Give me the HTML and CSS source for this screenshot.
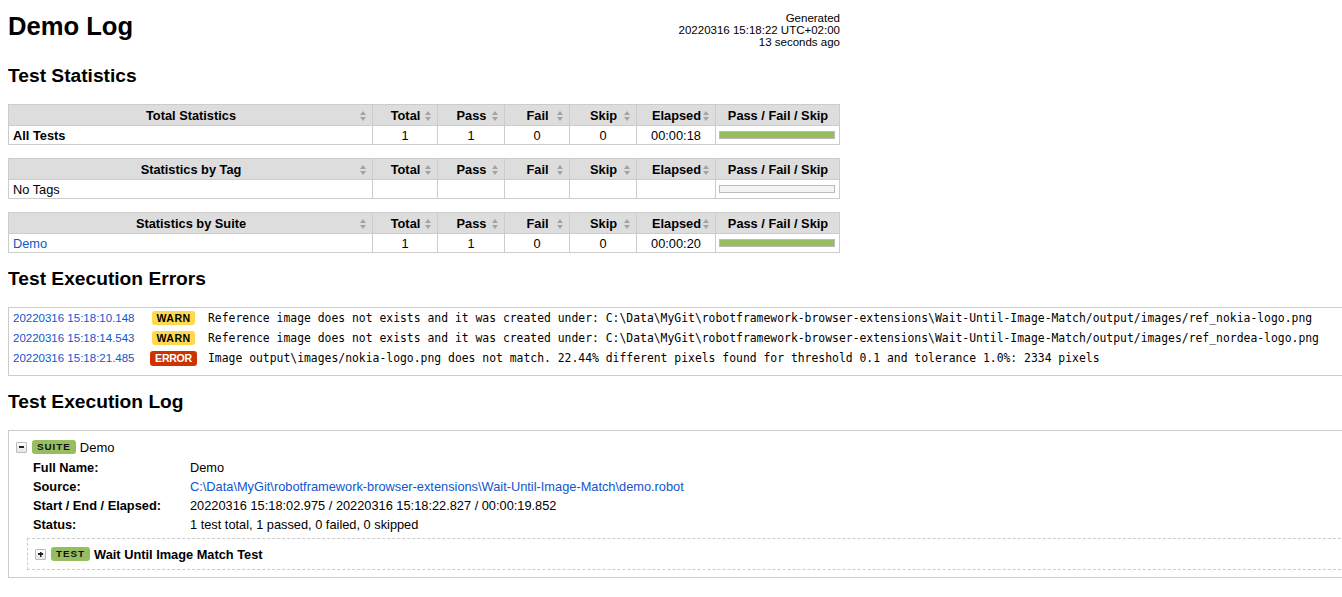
FILE: index.html
```html
<!DOCTYPE html>
<html lang="en">
<head>
<meta charset="utf-8">
<title>Demo Log</title>
<link rel="stylesheet" href="styles.css">
</head>
<body>
<header class="page-header">
  <h1 class="title">Demo Log</h1>
  <div class="generated">Generated<br>20220316 15:18:22 UTC+02:00<br>13 seconds ago</div>
</header>

<h2 class="section-title">Test Statistics</h2>

<table class="stats">
  <colgroup><col class="c-name"><col class="c-num"><col class="c-num2"><col class="c-num"><col class="c-num2"><col class="c-el"><col class="c-graph"></colgroup>
  <thead>
    <tr>
      <th><div class="th-in"><span></span><span>Total Statistics</span><span class="sort"></span></div></th>
      <th><div class="th-in"><span></span><span>Total</span><span class="sort"></span></div></th>
      <th><div class="th-in"><span></span><span>Pass</span><span class="sort"></span></div></th>
      <th><div class="th-in"><span></span><span>Fail</span><span class="sort"></span></div></th>
      <th><div class="th-in"><span></span><span>Skip</span><span class="sort"></span></div></th>
      <th><div class="th-in"><span></span><span>Elapsed</span><span class="sort"></span></div></th>
      <th class="graph-h">Pass / Fail / Skip</th>
    </tr>
  </thead>
  <tbody>
    <tr>
      <td class="name bold">All Tests</td>
      <td>1</td><td>1</td><td>0</td><td>0</td><td>00:00:18</td>
      <td class="graph"><div class="bar pass"></div></td>
    </tr>
  </tbody>
</table>

<table class="stats">
  <colgroup><col class="c-name"><col class="c-num"><col class="c-num2"><col class="c-num"><col class="c-num2"><col class="c-el"><col class="c-graph"></colgroup>
  <thead>
    <tr>
      <th><div class="th-in"><span></span><span>Statistics by Tag</span><span class="sort"></span></div></th>
      <th><div class="th-in"><span></span><span>Total</span><span class="sort"></span></div></th>
      <th><div class="th-in"><span></span><span>Pass</span><span class="sort"></span></div></th>
      <th><div class="th-in"><span></span><span>Fail</span><span class="sort"></span></div></th>
      <th><div class="th-in"><span></span><span>Skip</span><span class="sort"></span></div></th>
      <th><div class="th-in"><span></span><span>Elapsed</span><span class="sort"></span></div></th>
      <th class="graph-h">Pass / Fail / Skip</th>
    </tr>
  </thead>
  <tbody>
    <tr>
      <td class="name">No Tags</td>
      <td></td><td></td><td></td><td></td><td></td>
      <td class="graph"><div class="bar empty"></div></td>
    </tr>
  </tbody>
</table>

<table class="stats">
  <colgroup><col class="c-name"><col class="c-num"><col class="c-num2"><col class="c-num"><col class="c-num2"><col class="c-el"><col class="c-graph"></colgroup>
  <thead>
    <tr>
      <th><div class="th-in"><span></span><span>Statistics by Suite</span><span class="sort"></span></div></th>
      <th><div class="th-in"><span></span><span>Total</span><span class="sort"></span></div></th>
      <th><div class="th-in"><span></span><span>Pass</span><span class="sort"></span></div></th>
      <th><div class="th-in"><span></span><span>Fail</span><span class="sort"></span></div></th>
      <th><div class="th-in"><span></span><span>Skip</span><span class="sort"></span></div></th>
      <th><div class="th-in"><span></span><span>Elapsed</span><span class="sort"></span></div></th>
      <th class="graph-h">Pass / Fail / Skip</th>
    </tr>
  </thead>
  <tbody>
    <tr>
      <td class="name"><a href="#s1">Demo</a></td>
      <td>1</td><td>1</td><td>0</td><td>0</td><td>00:00:20</td>
      <td class="graph"><div class="bar pass"></div></td>
    </tr>
  </tbody>
</table>

<h2 class="section-title">Test Execution Errors</h2>

<div class="errors">
  <div class="err-row">
    <a class="err-time" href="#e1">20220316 15:18:10.148</a>
    <div class="err-level"><span class="label warn">WARN</span></div>
    <div class="err-msg">Reference image does not exists and it was created under: C:\Data\MyGit\robotframework-browser-extensions\Wait-Until-Image-Match/output/images/ref_nokia-logo.png</div>
  </div>
  <div class="err-row">
    <a class="err-time" href="#e2">20220316 15:18:14.543</a>
    <div class="err-level"><span class="label warn">WARN</span></div>
    <div class="err-msg">Reference image does not exists and it was created under: C:\Data\MyGit\robotframework-browser-extensions\Wait-Until-Image-Match/output/images/ref_nordea-logo.png</div>
  </div>
  <div class="err-row">
    <a class="err-time" href="#e3">20220316 15:18:21.485</a>
    <div class="err-level"><span class="label error">ERROR</span></div>
    <div class="err-msg">Image output\images/nokia-logo.png does not match. 22.44% different pixels found for threshold 0.1 and tolerance 1.0%: 2334 pixels</div>
  </div>
</div>

<h2 class="section-title">Test Execution Log</h2>

<div class="log" id="s1">
  <div class="el-header">
    <span class="toggle minus"></span>
    <span class="label suite">SUITE</span>
    <span class="suite-name">Demo</span>
  </div>
  <div class="meta">
    <div class="meta-k">Full Name:</div><div class="meta-v">Demo</div>
    <div class="meta-k">Source:</div><div class="meta-v"><a href="#src">C:\Data\MyGit\robotframework-browser-extensions\Wait-Until-Image-Match\demo.robot</a></div>
    <div class="meta-k">Start / End / Elapsed:</div><div class="meta-v">20220316 15:18:02.975 / 20220316 15:18:22.827 / 00:00:19.852</div>
    <div class="meta-k">Status:</div><div class="meta-v">1 test total, 1 passed, 0 failed, 0 skipped</div>
  </div>
  <div class="test">
    <div class="el-header">
      <span class="toggle plus"></span>
      <span class="label test-l">TEST</span>
      <span class="test-name">Wait Until Image Match Test</span>
    </div>
  </div>
</div>
</body>
</html>
```

FILE: styles.css
```css
html {
  overflow-x: hidden;
}

body {
  margin: 0;
  padding: 12px 8px 0 8px;
  font-family: "Liberation Sans", Arial, Helvetica, sans-serif;
  font-size: 12.8px;
  color: #000;
  background: #fff;
}

a {
  color: #15c;
  text-decoration: none;
}

.page-header {
  width: 832px;
  height: 38px;
  display: flex;
  justify-content: space-between;
  align-items: flex-start;
}

.title {
  margin: 0;
  font-size: 25.6px;
  font-weight: bold;
  line-height: 29px;
}

.generated {
  font-size: 11.5px;
  line-height: 12px;
  text-align: right;
  white-space: nowrap;
}

.section-title {
  margin: 15px 0 17px 0;
  font-size: 19.2px;
  font-weight: bold;
  line-height: 22px;
}

.stats {
  width: 832px;
  table-layout: fixed;
  border-collapse: collapse;
  border: 1px solid #ccc;
  margin-bottom: 13px;
}

.c-name { width: 364px; }
.c-num { width: 65px; }
.c-num2 { width: 67px; }
.c-el { width: 79px; }
.c-graph { width: 124px; }

.stats th {
  background: #ddd;
  border: 1px solid #ccc;
  padding: 3px 5px 2px 6px;
  font-weight: bold;
  height: 15px;
  white-space: nowrap;
}

.th-in {
  display: grid;
  grid-template-columns: 7px 1fr 7px;
  align-items: center;
  text-align: center;
}

.graph-h {
  text-align: center;
}

.sort {
  display: flex;
  flex-direction: column;
  gap: 2px;
  width: 7px;
}

.sort::before {
  content: "";
  width: 0;
  height: 0;
  border-left: 3.5px solid transparent;
  border-right: 3.5px solid transparent;
  border-bottom: 4px solid #a3a3a3;
}

.sort::after {
  content: "";
  width: 0;
  height: 0;
  border-left: 3.5px solid transparent;
  border-right: 3.5px solid transparent;
  border-top: 4px solid #a3a3a3;
}

.stats td {
  border: 1px solid #ccc;
  padding: 1px 4px 1px 4px;
  height: 16px;
  text-align: center;
  white-space: nowrap;
}

.stats td.name {
  text-align: left;
}

.bold {
  font-weight: bold;
}

.stats td.graph {
  padding: 0 4px 0 3px;
}

.bar {
  height: 6px;
  border: 1px solid #bbb;
}

.bar.pass {
  background: #97bd61;
}

.bar.empty {
  background: #f4f4f4;
}

.errors {
  width: 1400px;
  border: 1px solid #ccc;
  padding: 0 0 7px 0;
}

.err-row {
  display: flex;
  align-items: center;
  height: 20px;
}

.err-time {
  width: 127px;
  padding-left: 4px;
  font-size: 11.5px;
  white-space: nowrap;
}

.err-level {
  width: 67px;
  display: flex;
  justify-content: center;
}

.err-msg {
  padding-left: 1px;
  font-family: "DejaVu Sans Mono", "Liberation Mono", monospace;
  font-size: 11.4px;
  white-space: pre;
}

.label {
  display: inline-block;
  font-weight: bold;
  font-size: 9.8px;
  line-height: 10px;
  padding: 2px 5px;
  border-radius: 3px;
  letter-spacing: 1px;
  white-space: nowrap;
  color: #000;
}

.label.warn {
  background: #fed84f;
  font-size: 10.6px;
  line-height: 11px;
  letter-spacing: 0.4px;
  padding: 2px 5px 1px 5px;
}

.label.error {
  background: #c30;
  color: #fff;
  font-size: 10.6px;
  line-height: 11px;
  letter-spacing: -0.3px;
  padding: 2px 5px 2px 5px;
}

.label.suite,
.label.test-l {
  background: #97bd61;
  color: #111;
}

.log {
  width: 1400px;
  border: 1px solid #ccc;
  padding: 6px 0 7px 7px;
}

.el-header {
  display: flex;
  align-items: center;
  height: 20px;
}

.toggle {
  width: 9px;
  height: 9px;
  border: 1px solid #bbb;
  border-radius: 1px;
  background: linear-gradient(#fff, #e6e6e6);
  display: flex;
  align-items: center;
  justify-content: center;
  margin-right: 5px;
}

.toggle::before {
  content: "";
  width: 5px;
  height: 1.5px;
  background: #222;
}

.toggle.plus {
  background:
    linear-gradient(#222, #222) center / 1.5px 5px no-repeat,
    linear-gradient(#fff, #e6e6e6);
}

.suite-name {
  margin-left: 4px;
  font-size: 13px;
}

.test-name {
  margin-left: 4px;
  font-weight: bold;
}

.meta {
  display: grid;
  grid-template-columns: 157px 1fr;
  grid-auto-rows: 19px;
  align-items: center;
  margin-left: 17px;
  margin-top: 1px;
  white-space: nowrap;
}

.meta-k {
  font-weight: bold;
}

.test {
  margin: 4px 0 0 11px;
  border: 1px dashed #ccc;
  border-right: none;
  padding: 5px 0 5px 7px;
}
```
